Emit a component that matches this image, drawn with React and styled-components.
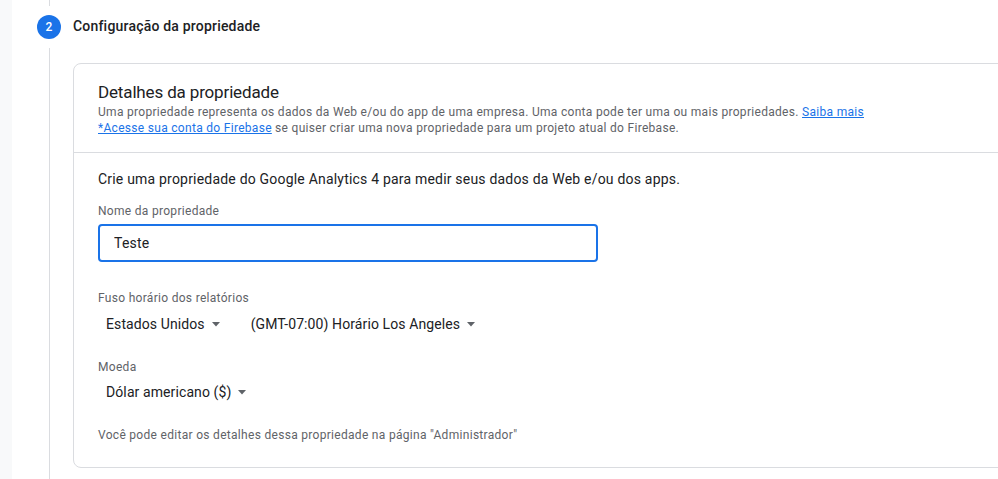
import React from "react";
import styled, { createGlobalStyle } from "styled-components";

const GlobalStyle = createGlobalStyle`
  html, body {
    margin: 0;
    padding: 0;
    height: 100%;
    overflow: hidden;
    background: #ffffff;
  }
  body {
    font-family: Roboto, "Liberation Sans", Arial, sans-serif;
    color: #202124;
  }
  #root {
    height: 100%;
  }
`;

const Page = styled.div`
  display: flex;
  height: 100%;
`;

const SideStrip = styled.div`
  width: 12px;
  flex-shrink: 0;
  background: #f8f9fa;
`;

const Step = styled.div`
  flex: 1;
  display: grid;
  grid-template-columns: 24px 1fr;
  column-gap: 12px;
  padding-left: 25px;
  min-width: 0;
`;

const Rail = styled.div`
  display: flex;
  flex-direction: column;
  align-items: center;
`;

const RailLine = styled.div`
  width: 1px;
  background: #dadce0;
  height: ${(p) => (p.$grow ? "auto" : `${p.$h}px`)};
  flex: ${(p) => (p.$grow ? 1 : "none")};
  margin-top: ${(p) => p.$mt || 0}px;
`;

const StepBadge = styled.div`
  width: 24px;
  height: 24px;
  border-radius: 50%;
  background: #1a73e8;
  color: #ffffff;
  font-size: 12px;
  font-weight: 500;
  display: flex;
  align-items: center;
  justify-content: center;
  margin-top: 9px;
`;

const Content = styled.div`
  min-width: 0;
  display: flex;
  flex-direction: column;
`;

const StepTitle = styled.div`
  height: 24px;
  margin-top: 14px;
  display: flex;
  align-items: center;
  font-size: 14px;
  font-weight: 500;
  letter-spacing: 0.2px;
  color: #202124;
`;

const Card = styled.div`
  margin-top: 25px;
  margin-right: -40px;
  border: 1px solid #dadce0;
  border-radius: 8px;
  background: #ffffff;
`;

const CardHeader = styled.div`
  padding: 16px 24px 16px;
  border-bottom: 1px solid #dadce0;
`;

const CardTitle = styled.div`
  font-size: 17px;
  line-height: 24px;
  letter-spacing: -0.15px;
  color: #202124;
`;

const Hint = styled.div`
  font-size: 12px;
  line-height: 16px;
  letter-spacing: 0.3px;
  color: #5f6368;
  margin-top: ${(p) => p.$mt || 0}px;
`;

const Link = styled.a`
  color: #1a73e8;
  text-decoration: underline;
  cursor: pointer;
`;

const CardBody = styled.div`
  padding: 16px 24px 24px;
`;

const Lead = styled.div`
  font-size: 14px;
  line-height: 20px;
  letter-spacing: 0.2px;
  color: #202124;
`;

const FieldLabel = styled.div`
  font-size: 12px;
  line-height: 16px;
  letter-spacing: 0.3px;
  color: #5f6368;
  margin-top: ${(p) => p.$mt}px;
`;

const TextInput = styled.input`
  display: block;
  box-sizing: border-box;
  width: 500px;
  height: 38px;
  margin-top: 5px;
  padding: 0 14px;
  border: 2px solid #1a73e8;
  border-radius: 4px;
  font-family: inherit;
  font-size: 14px;
  letter-spacing: 0.2px;
  color: #202124;
  outline: none;
`;

const SelectRow = styled.div`
  display: flex;
  gap: 14px;
  margin-top: ${(p) => p.$mt}px;
`;

const Select = styled.button`
  display: flex;
  align-items: center;
  gap: 6px;
  height: 20px;
  padding: 0 8px;
  border: none;
  background: transparent;
  font-family: inherit;
  font-size: 14px;
  line-height: 20px;
  letter-spacing: 0.1px;
  color: #202124;
  cursor: pointer;
`;

const Caret = () => (
  <svg width="10" height="5" viewBox="0 0 10 5" aria-hidden="true">
    <path d="M1 0h8L5 4.5z" fill="#5f6368" />
  </svg>
);

export default function App() {
  return (
    <>
      <GlobalStyle />
      <Page>
        <SideStrip />
        <Step>
          <Rail>
            <RailLine $h={6} />
            <StepBadge>2</StepBadge>
            <RailLine $grow $mt={9} />
          </Rail>
          <Content>
            <StepTitle>Configuração da propriedade</StepTitle>
            <Card>
              <CardHeader>
                <CardTitle>Detalhes da propriedade</CardTitle>
                <Hint>
                  Uma propriedade representa os dados da Web e/ou do app de uma
                  empresa. Uma conta pode ter uma ou mais propriedades.{" "}
                  <Link>Saiba mais</Link>
                </Hint>
                <Hint>
                  <Link>*Acesse sua conta do Firebase</Link> se quiser criar uma
                  nova propriedade para um projeto atual do Firebase.
                </Hint>
              </CardHeader>
              <CardBody>
                <Lead>
                  Crie uma propriedade do Google Analytics 4 para medir seus
                  dados da Web e/ou dos apps.
                </Lead>
                <FieldLabel $mt={14}>Nome da propriedade</FieldLabel>
                <TextInput defaultValue="Teste" />
                <FieldLabel $mt={28}>Fuso horário dos relatórios</FieldLabel>
                <SelectRow $mt={8}>
                  <Select>
                    Estados Unidos <Caret />
                  </Select>
                  <Select>
                    (GMT-07:00) Horário Los Angeles <Caret />
                  </Select>
                </SelectRow>
                <FieldLabel $mt={25}>Moeda</FieldLabel>
                <SelectRow $mt={7}>
                  <Select>
                    Dólar americano ($) <Caret />
                  </Select>
                </SelectRow>
                <Hint $mt={25}>
                  Você pode editar os detalhes dessa propriedade na página
                  "Administrador"
                </Hint>
              </CardBody>
            </Card>
          </Content>
        </Step>
      </Page>
    </>
  );
}
